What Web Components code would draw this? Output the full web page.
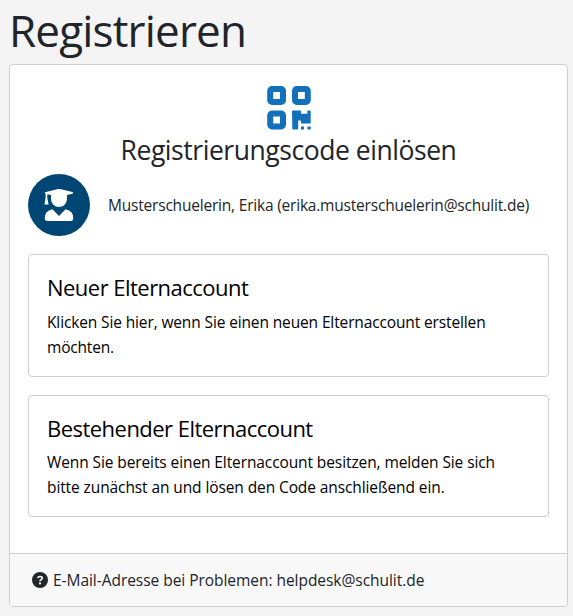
<!DOCTYPE html>
<html lang="de">
<head>
<meta charset="utf-8">
<title>Registrieren</title>
<style>
body{margin:0;background:#f4f4f4;color:#212529;font-family:"Open Sans","Noto Sans",sans-serif;font-size:15.5px;line-height:24.5px}
</style>
</head>
<body>
<register-page></register-page>
<script>
function define(name, html){
  customElements.define(name, class extends HTMLElement{
    constructor(){ super(); this.attachShadow({mode:'open'}).innerHTML = html; }
  });
}
define('text-line', `<style>:host{display:block;white-space:nowrap}</style><slot></slot>`);
define('qr-icon', `<style>:host{display:block;width:44px;height:44px}svg{display:block}</style>
<svg width="44" height="44" viewBox="0 0 44 44" fill="none" stroke="#1271ba" stroke-width="6">
<rect x="3.200" y="3" width="12.800" height="13" rx="1.800"/><rect x="28" y="3" width="12.800" height="13" rx="1.800"/><rect x="3.200" y="27.600" width="12.800" height="12.800" rx="1.800"/>
<path stroke="none" fill="#1271ba" d="M25 25.200q0-.7.7-.7H33.300q.7 0 .7.7V27.700h6.300V25.200q0-.7.7-.7h2q.7 0 .7.7V36.700q0 .7-.7.7h-8.300q-.7 0-.7-.7V34.400h-2.800v8.300q0 .7-.7.7h-4.500q-.7 0-.7-.7zM34 40.400h3v3h-3zM40.500 40.400h3.200v3h-3.200z"/>
</svg>`);
define('student-avatar', `<style>:host{display:grid;place-items:center;width:62px;height:62px;border-radius:50%;background:#004675;flex:none}svg{display:block}</style>
<svg width="62" height="62" viewBox="0 0 62 62" fill="#fff">
<path d="M17 18.300 30 15q1-.2 2 0l12.500 3q1.500.7 0 1.700l-5.500 1.400v4a8 8 0 0 1-16 0v-4l-3.700-.9v3.700l1.300 6.600h-4.200l1.200-6.600v-4.500q-1.500-.5-.6-1.100z"/>
<path d="M24.500 35.300 31 42l6.500-6.700q8 1.500 7.800 9.200 0 2.400-2.200 2.400H19q-2.300 0-2.300-2.400 0-7.700 7.800-9.200z"/>
</svg>`);
define('help-icon', `<style>:host{display:block;width:16px;height:16px;flex:none}svg{display:block}</style>
<svg width="16" height="16" viewBox="0 0 16 16"><circle cx="8" cy="8" r="8" fill="#212529"/><path d="M5.800 6q.3-1.500 2.200-1.500 2.300 0 2.300 1.600 0 1-1.200 1.600Q8 8.200 8 9.200" fill="none" stroke="#f8f8f8" stroke-width="1.700"/><circle cx="8" cy="11.400" r="1.100" fill="#f8f8f8"/></svg>`);
define('account-option', `<style>:host{display:block;box-sizing:border-box;border:1px solid #cecece;border-radius:4px;padding:18px;color:#000;height:var(--h,123px)}
.title{font-size:22px;line-height:29px;margin-bottom:8px;letter-spacing:-.53px}
:host([compact]) .title{line-height:28px}</style>
<div class="title"><slot name="title"></slot></div><slot></slot>`);
define('user-row', `<style>:host{display:flex;align-items:center;gap:18px}</style><student-avatar></student-avatar><slot></slot>`);
define('register-card', `<style>
:host{display:flex;flex-direction:column;box-sizing:border-box;height:543px;border:1px solid #cecece;border-radius:4px;background:#fff;overflow:hidden}
.body{flex:1;padding:21px 18px 0;display:flex;flex-direction:column}
qr-icon{margin:0 auto}
.heading{font-size:26.500px;line-height:34px;text-align:center;margin:3px 0 7px;display:flex;justify-content:center}
.options{display:grid;gap:18px;margin-top:18px}
footer{box-sizing:border-box;height:53px;border-top:1px solid #cecece;background:#f8f8f8;padding:0 22px;display:flex;align-items:center;gap:5px}
</style>
<div class="body"><qr-icon></qr-icon><div class="heading"><slot name="heading"></slot></div><slot name="user"></slot><div class="options"><slot></slot></div></div>
<footer><help-icon></help-icon><slot name="footer"></slot></footer>`);
define('register-page', `<style>
:host{display:block;padding:0 5px 9px 9px}
h1{margin:0;font-weight:400;font-size:44px;line-height:60px;height:64px}
</style>
<h1><text-line style="letter-spacing:-.82px">Registrieren</text-line></h1>
<register-card>
<text-line slot="heading" style="letter-spacing:-.45px">Registrierungscode einlösen</text-line>
<user-row slot="user"><text-line style="letter-spacing:-.2px">Musterschuelerin, Erika (erika.musterschuelerin@schulit.de)</text-line></user-row>
<account-option><text-line slot="title">Neuer Elternaccount</text-line><text-line style="letter-spacing:-.13px">Klicken Sie hier, wenn Sie einen neuen Elternaccount erstellen</text-line><text-line style="letter-spacing:-.2px">möchten.</text-line></account-option>
<account-option compact style="--h:122px"><text-line slot="title">Bestehender Elternaccount</text-line><text-line style="letter-spacing:-.1px">Wenn Sie bereits einen Elternaccount besitzen, melden Sie sich</text-line><text-line style="letter-spacing:-.1px">bitte zunächst an und lösen den Code anschließend ein.</text-line></account-option>
<text-line slot="footer" style="letter-spacing:-.04px">E-Mail-Adresse bei Problemen: helpdesk@schulit.de</text-line>
</register-card>`);
</script>
</body>
</html>
